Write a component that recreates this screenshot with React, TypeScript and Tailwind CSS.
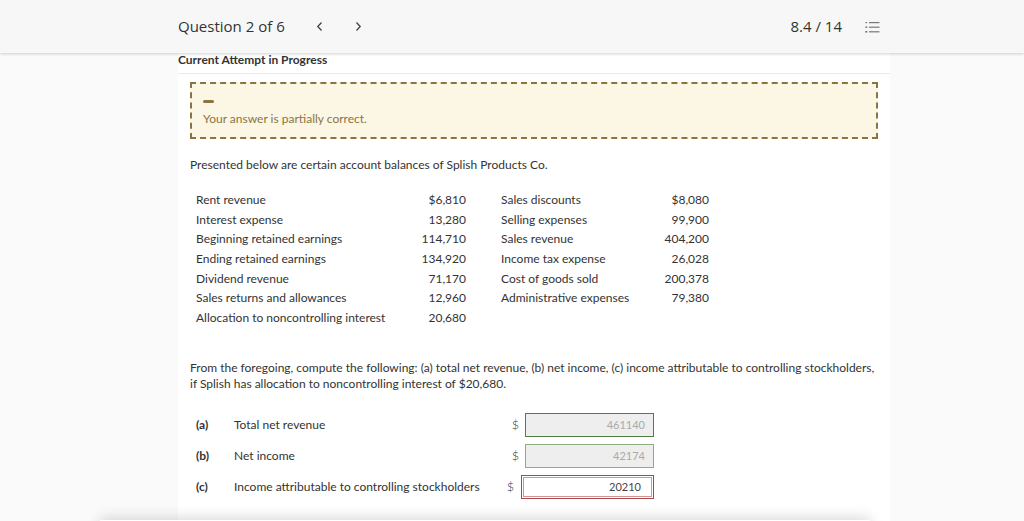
import React from "react";

const left: [string, string][] = [
  ["Rent revenue", "$6,810"],
  ["Interest expense", "13,280"],
  ["Beginning retained earnings", "114,710"],
  ["Ending retained earnings", "134,920"],
  ["Dividend revenue", "71,170"],
  ["Sales returns and allowances", "12,960"],
  ["Allocation to noncontrolling interest", "20,680"],
];
const right: [string, string][] = [
  ["Sales discounts", "$8,080"],
  ["Selling expenses", "99,900"],
  ["Sales revenue", "404,200"],
  ["Income tax expense", "26,028"],
  ["Cost of goods sold", "200,378"],
  ["Administrative expenses", "79,380"],
];

function ListIcon() {
  return (
    <svg width="15" height="13" viewBox="0 0 15 13" fill="none">
      <rect x="0.5" y="1" width="1.6" height="1.2" fill="#777" />
      <rect x="0.3" y="5.5" width="2" height="1.4" fill="#777" />
      <rect x="0.3" y="10" width="2" height="1.6" fill="#777" />
      <line x1="4" y1="1.6" x2="14.5" y2="1.6" stroke="#777" strokeWidth="1.2" />
      <line x1="4" y1="6.2" x2="14.5" y2="6.2" stroke="#777" strokeWidth="1.2" />
      <line x1="4" y1="10.8" x2="14.5" y2="10.8" stroke="#777" strokeWidth="1.2" />
    </svg>
  );
}

export default function App() {
  return (
    <div
      className="relative min-h-screen h-[521px] overflow-hidden bg-[#fafafa]"
      style={{ fontFamily: "Lato, 'Open Sans', sans-serif" }}
    >
      <header className="relative z-10 h-[53px] bg-[#f7f7f7] shadow-[0_1px_3px_rgba(0,0,0,0.18)]">
        <div
          className="ml-[178px] w-[702px] h-full flex items-center text-[15px] text-[#333]"
          style={{ fontFamily: "'Open Sans', sans-serif" }}
        >
          <span>Question 2 of 6</span>
          <svg className="ml-[31px]" width="7" height="11" viewBox="0 0 7 11">
            <path d="M5.5 1.5 L1.8 5.5 L5.5 9.5" stroke="#444" strokeWidth="1.3" fill="none" />
          </svg>
          <svg className="ml-[32px]" width="7" height="11" viewBox="0 0 7 11">
            <path d="M1.5 1.5 L5.2 5.5 L1.5 9.5" stroke="#444" strokeWidth="1.3" fill="none" />
          </svg>
          <span className="ml-auto">8.4 / 14</span>
          <span className="ml-[23px] mt-[2px]">
            <ListIcon />
          </span>
        </div>
      </header>

      <main className="ml-[178px] w-[712px] bg-white h-[468px]" />

      <div className="absolute left-[178px] top-[53px] w-[712px] text-[#333]">
        <div className="h-[21px] border-b border-[#ebebeb] text-[12px] font-bold text-[#333] leading-none pt-[1px]">
          Current Attempt in Progress
        </div>
        <div className="px-[12px]">
          <div className="mt-[8px] h-[57px] border-2 border-dashed border-[#8c7342] bg-[#fbf7e4] px-[11px] pt-[16px]">
            <div className="w-[11px] h-[3px] rounded-full bg-[#8c7342]" />
            <div className="mt-[10px] text-[12px] text-[#8c7342] leading-none">
              Your answer is partially correct.
            </div>
          </div>

          <p className="mt-[20px] text-[12px] leading-none">
            Presented below are certain account balances of Splish Products Co.
          </p>

          <div className="mt-[19px] ml-[6px] flex text-[12px]">
            <div className="w-[270px]">
              {left.map(([l, v]) => (
                <div key={l} className="h-[19.7px] flex items-center justify-between">
                  <span>{l}</span>
                  <span>{v}</span>
                </div>
              ))}
            </div>
            <div className="ml-[35px] w-[208px]">
              {right.map(([l, v]) => (
                <div key={l} className="h-[19.7px] flex items-center justify-between">
                  <span>{l}</span>
                  <span>{v}</span>
                </div>
              ))}
            </div>
          </div>

          <p className="mt-[32px] text-[12px] leading-[16px]">
            From the foregoing, compute the following: (a) total net revenue, (b) net income, (c) income
            attributable to controlling stockholders, if Splish has allocation to noncontrolling interest of $20,680.
          </p>

          <div className="mt-[18px] ml-[6px] w-[458px] text-[12px]">
            <div className="h-[31px] flex items-center">
              <span className="w-[38px] font-bold">(a)</span>
              <span className="flex-1">Total net revenue</span>
              <span className="mr-[6px] text-[12.5px] font-light">$</span>
              <div className="w-[129px] h-[24px] border border-[#4f7f41] bg-[#eeeeee] flex items-center justify-end pr-[8px] text-[11px] text-[#aaa]">
                461140
              </div>
            </div>
            <div className="h-[31px] flex items-center">
              <span className="w-[38px] font-bold">(b)</span>
              <span className="flex-1">Net income</span>
              <span className="mr-[6px] text-[12.5px] font-light">$</span>
              <div className="w-[129px] h-[24px] border border-[#8fae86] bg-[#eeeeee] flex items-center justify-end pr-[8px] text-[11px] text-[#aaa]">
                42174
              </div>
            </div>
            <div className="h-[31px] flex items-center">
              <span className="w-[38px] font-bold">(c)</span>
              <span className="flex-1">Income attributable to controlling stockholders</span>
              <span className="mr-[7px] text-[12.5px] font-light">$</span>
              <div className="w-[133px] h-[24px] border border-[#a94848] bg-white p-[1px]">
                <div className="w-full h-full border border-[#d09595] flex items-center justify-end pr-[10px] text-[11px] text-[#444]">
                  20210
                </div>
              </div>
            </div>
          </div>
        </div>
      </div>

      <div className="absolute left-[100px] top-[520px] w-[770px] h-[40px] bg-white shadow-[0_-2px_14px_rgba(0,0,0,0.16)]" />
    </div>
  );
}
